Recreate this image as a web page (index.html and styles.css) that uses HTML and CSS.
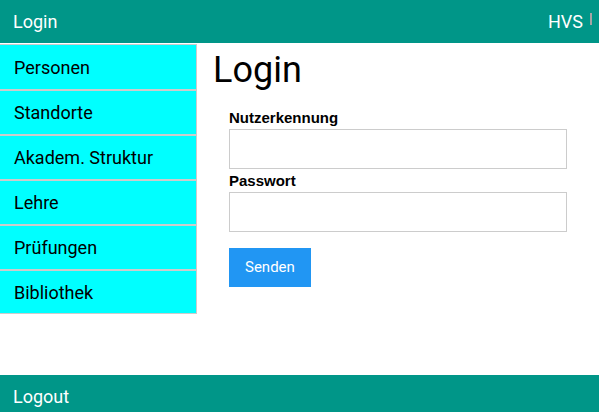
FILE: index.html
```html
<!DOCTYPE html>
<html lang="de">
<head>
<meta charset="utf-8">
<title>Login</title>
<link rel="stylesheet" href="styles.css">
</head>
<body>
<header class="topbar">
  <span class="bar-item">Login</span>
  <span class="bar-right">
    <span class="bar-item">HVS</span>
    <span class="divider"></span>
  </span>
</header>
<div class="layout">
  <nav class="sidebar">
    <a class="side-item">Personen</a>
    <a class="side-item">Standorte</a>
    <a class="side-item">Akadem. Struktur</a>
    <a class="side-item">Lehre</a>
    <a class="side-item">Prüfungen</a>
    <a class="side-item">Bibliothek</a>
  </nav>
  <main class="content">
    <h1 class="title">Login</h1>
    <form class="form">
      <label class="label">Nutzerkennung</label>
      <input class="input" type="text">
      <label class="label">Passwort</label>
      <input class="input" type="password">
      <button class="btn" type="button">Senden</button>
    </form>
  </main>
</div>
<footer class="footbar">
  <span class="bar-item">Logout</span>
</footer>
</body>
</html>
```

FILE: styles.css
```css
* { box-sizing: border-box; }
html, body { margin: 0; padding: 0; }
body {
  font-family: Roboto, "Liberation Sans", sans-serif;
  font-size: 15px;
  line-height: 1.5;
  color: #000;
  background: #fff;
  overflow: hidden;
}
.topbar, .footbar {
  background: #009688;
  color: #fff;
  font-size: 18px;
  line-height: 27px;
  height: 43px;
  display: flex;
  align-items: flex-start;
  justify-content: space-between;
}
.bar-item {
  display: block;
  padding: 8px 13px;
}
.bar-right {
  display: flex;
  align-items: flex-start;
}
.bar-right .bar-item { padding-right: 7px; }
.divider {
  width: 2px;
  height: 12px;
  margin-top: 13px;
  background: #a4a4a4;
  margin-right: 7px;
}
.layout {
  display: flex;
  align-items: flex-start;
  min-height: 332px;
  padding-top: 1px;
}
.sidebar {
  width: 197px;
  flex: none;
  display: flex;
  flex-direction: column;
}
.side-item {
  display: block;
  background: #00ffff;
  color: #000;
  font-size: 18px;
  line-height: 27px;
  padding: 8px 14px;
  border-top: 1px solid #ccc;
  border-bottom: 1px solid #ccc;
  border-right: 1px solid #ccc;
  text-decoration: none;
}
.side-item:first-child { padding-top: 9px; }
.side-item:last-child { padding-bottom: 7px; }
.content {
  flex: 1;
  padding: 0 16px;
}
.title {
  font-family: Roboto, sans-serif;
  font-size: 36px;
  font-weight: 400;
  line-height: 40px;
  margin: 6px 0 0;
}
.form {
  padding: 16px;
  display: flex;
  flex-direction: column;
  align-items: flex-start;
}
.label {
  font-family: "Liberation Sans", Arial, sans-serif;
  font-weight: bold;
  font-size: 15px;
  line-height: 23px;
  display: block;
}
.input {
  display: block;
  width: 100%;
  height: 40px;
  border: 1px solid #ccc;
  padding: 8px;
  margin: 0;
  font-size: 15px;
  background: #fff;
}
.btn {
  margin-top: 16px;
  background: #2196f3;
  color: #fff;
  border: none;
  font-family: Roboto, sans-serif;
  font-size: 15px;
  line-height: 22.5px;
  padding: 8px 16px;
  height: 39px;
}
```
